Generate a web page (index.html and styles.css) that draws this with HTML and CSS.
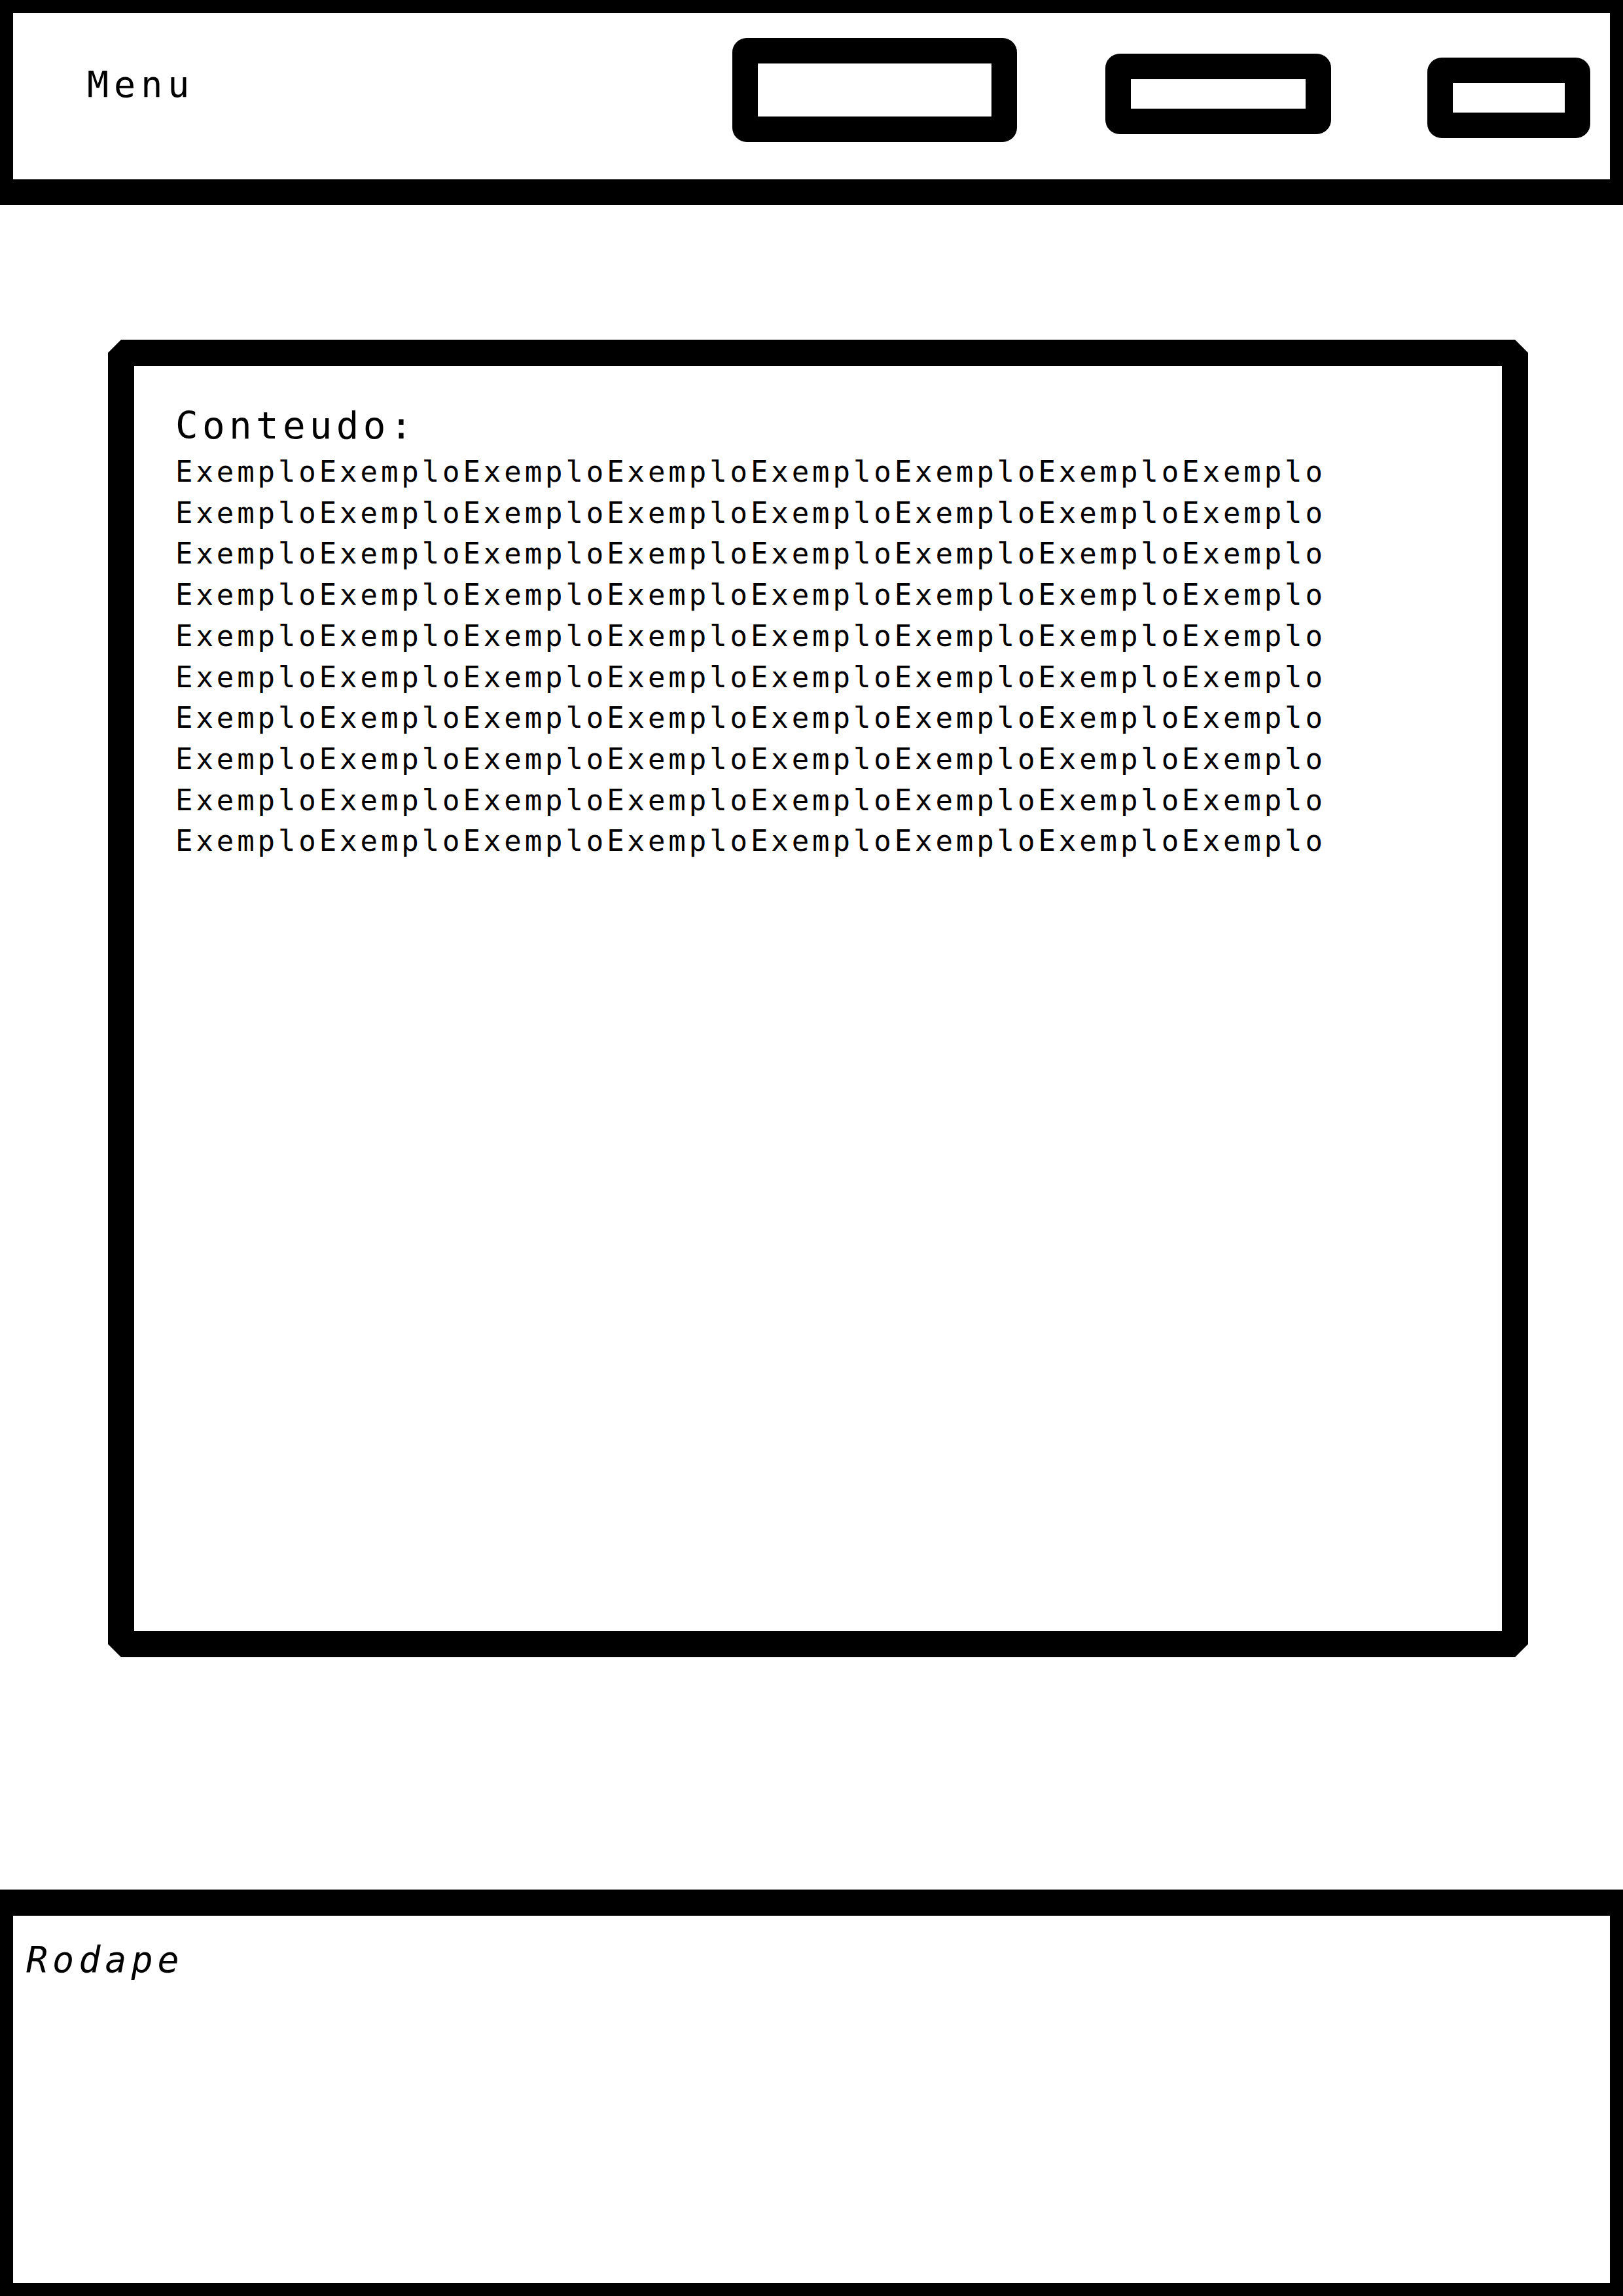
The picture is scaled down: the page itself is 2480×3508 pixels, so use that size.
FILE: index.html
```html
<!DOCTYPE html>
<html lang="pt">
<head>
<meta charset="utf-8">
<title>Wireframe</title>
<link rel="stylesheet" href="styles.css">
</head>
<body>
<header class="topbar">
  <div class="menu-label">Menu</div>
  <div class="spacer"></div>
  <div class="btn btn-large"></div>
  <div class="btn btn-medium"></div>
  <div class="btn btn-small"></div>
</header>
<main class="content-box">
  <div class="content-title">Conteudo:</div>
  <div class="content-text">
    <div class="line">ExemploExemploExemploExemploExemploExemploExemploExemplo</div>
    <div class="line">ExemploExemploExemploExemploExemploExemploExemploExemplo</div>
    <div class="line">ExemploExemploExemploExemploExemploExemploExemploExemplo</div>
    <div class="line">ExemploExemploExemploExemploExemploExemploExemploExemplo</div>
    <div class="line">ExemploExemploExemploExemploExemploExemploExemploExemplo</div>
    <div class="line">ExemploExemploExemploExemploExemploExemploExemploExemplo</div>
    <div class="line">ExemploExemploExemploExemploExemploExemploExemploExemplo</div>
    <div class="line">ExemploExemploExemploExemploExemploExemploExemploExemplo</div>
    <div class="line">ExemploExemploExemploExemploExemploExemploExemploExemplo</div>
    <div class="line">ExemploExemploExemploExemploExemploExemploExemploExemplo</div>
  </div>
</main>
<footer class="footer">
  <div class="footer-label">Rodape</div>
</footer>
</body>
</html>
```

FILE: styles.css
```css
html, body {
  margin: 0;
  padding: 0;
  background: #ffffff;
}
body {
  width: 2480px;
  height: 3508px;
  overflow: hidden;
  color: #000000;
  font-family: "DejaVu Sans Mono", "Liberation Mono", monospace;
}

/* Header */
.topbar {
  box-sizing: border-box;
  height: 313px;
  border: 20px solid #000;
  border-bottom-width: 39px;
  display: flex;
  align-items: flex-start;
  padding-right: 30px;
}
.menu-label {
  margin-top: 77px;
  margin-left: 113px;
  font-size: 55px;
  line-height: 64px;
  letter-spacing: 8px;
}
.spacer {
  flex: 1;
}
.btn {
  box-sizing: border-box;
  border: 39px solid #000;
  border-radius: 22px;
  background: #fff;
  flex: none;
}
.btn-large {
  width: 435px;
  height: 159px;
  margin-top: 38px;
}
.btn-medium {
  width: 345px;
  height: 123px;
  margin-top: 62px;
  margin-left: 135px;
}
.btn-small {
  width: 249px;
  height: 123px;
  margin-top: 68px;
  margin-left: 147px;
}

/* Content */
.content-box {
  display: block;
  box-sizing: border-box;
  width: 2170px;
  height: 2013px;
  margin: 206px 0 0 165px;
  border: 40px solid #000;
  padding: 59px 0 0 63px;
  clip-path: polygon(20px 0, calc(100% - 20px) 0, 100% 20px, 100% calc(100% - 20px), calc(100% - 20px) 100%, 20px 100%, 0 calc(100% - 20px), 0 20px);
}
.content-title {
  font-size: 57.6px;
  line-height: 66px;
  letter-spacing: 6.3px;
}
.content-text {
  margin-top: 6px;
  font-size: 44px;
  line-height: 62.7px;
  letter-spacing: 4.9px;
  white-space: nowrap;
}

/* Footer */
.footer {
  box-sizing: border-box;
  height: 621px;
  margin-top: 355px;
  border: 20px solid #000;
  border-top-width: 40px;
  padding: 35px 0 0 20px;
}
.footer-label {
  font-style: italic;
  font-size: 55px;
  line-height: 64px;
  letter-spacing: 7px;
}
```
